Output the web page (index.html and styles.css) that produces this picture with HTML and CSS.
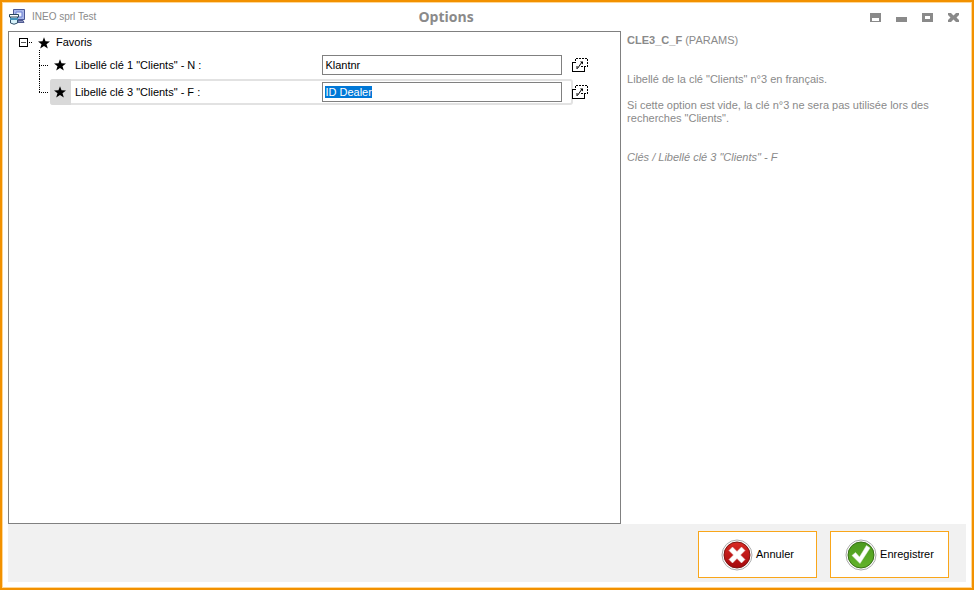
FILE: index.html
```html
<!DOCTYPE html>
<html lang="fr">
<head>
  <meta charset="UTF-8"/>
  <meta name="viewport" content="width=device-width,initial-scale=1"/>
  <title>Options</title>
  <link rel="stylesheet" href="styles.css">
</head>
<body>
  <svg class="defs" aria-hidden="true">
    <symbol id="star" viewBox="0 0 12 12">
      <path d="M6 .2 7.5 4.2 12 4.4 8.5 7.2 9.8 11.6 6 9.1 2.2 11.6 3.5 7.2 0 4.4 4.5 4.2z"/>
    </symbol>
    <symbol id="link" viewBox="0 0 16 15">
      <g fill="none" stroke="#000" shape-rendering="crispEdges">
        <path d="M3.500 .5H16M15.500 1V9M9 8.500H16M3.500 1V5" stroke-dasharray="2 1"/>
        <path d="M4 4.500H.5V13.500H12.500V9"/>
      </g>
      <path d="M5.500 10.500 10 4M5 8v3" fill="none" stroke="#000"/>
      <path d="M8 3.500h3v3z"/>
    </symbol>
  </svg>
  <header class="titlebar">
    <div class="app">
      <svg class="app-icon" width="16" height="16" viewBox="0 0 16 16">
        <path d="M4.500.5h11v10h-11z" fill="#aab8ea" stroke="#4a5796"/>
        <path d="M7 3h6v5H7z" fill="#edf3ff" stroke="#6b7fd2"/>
        <path d="M9 11.500h5l1 2H9z" fill="#8993bd" stroke="#515c91"/>
        <path d="M1.500 7.500v6.500q3.500 2.500 7 0V7.500z" fill="#d7f2fa" stroke="#33526b"/>
        <path d="M1 9h8v2H1z" fill="#4495bd"/>
        <path d="M.5 5.500h9v2.500h-9z" fill="#fff" stroke="#29465d"/>
      </svg>
      <span>INEO sprl Test</span>
    </div>
    <h1>Options</h1>
    <div class="window-buttons">
      <button type="button" aria-label="Enrouler"><svg width="12" height="10"><path d="M1 1h11v9H1zM3 6v3h7V6z" fill-rule="evenodd"/></svg></button>
      <button type="button" aria-label="Réduire"><svg width="12" height="10"><path d="M1 5h11v5H1z"/></svg></button>
      <button type="button" aria-label="Agrandir"><svg width="12" height="10"><path d="M1 1h11v9H1zM4 4v3h5V4z" fill-rule="evenodd"/></svg></button>
      <button type="button" aria-label="Fermer"><svg width="12" height="10"><path d="M1 1h3l2.500 2.500L9 1h3v2L9.500 5.500 12 8v2H9L6.500 7.500 4 10H1V8l2.500-2.500L1 3z"/></svg></button>
    </div>
  </header>
  <main>
    <section class="tree">
      <div class="group">
        <svg class="expander" width="14" height="10" shape-rendering="crispEdges">
          <path d="M.5 .5h8v8h-8z" fill="none" stroke="#000"/>
          <path d="M2 4.500h5" stroke="#555"/>
          <path d="M10 4.500h4" stroke="#000" stroke-dasharray="1 1"/>
        </svg>
        <svg class="star" width="12" height="12"><use href="#star"/></svg>
        <span>Favoris</span>
      </div>
      <ul>
        <li>
          <svg class="branch" width="41" height="27"><path d="M30.500-2V27M30 13.500H40"/></svg>
          <div class="row">
            <span class="mark"><svg class="star" width="12" height="12"><use href="#star"/></svg></span>
            <label for="cle1">Libellé clé 1 "Clients" - N :</label>
            <input id="cle1" type="text" value="Klantnr">
          </div>
          <button class="link" type="button" aria-label="Ouvrir clé 1"><svg width="16" height="15"><use href="#link"/></svg></button>
        </li>
        <li>
          <svg class="branch" width="41" height="27"><path d="M30.500 0V14M30 13.500H40"/></svg>
          <div class="row active">
            <span class="mark"><svg class="star" width="12" height="12"><use href="#star"/></svg></span>
            <label for="cle3">Libellé clé 3 "Clients" - F :</label>
            <input id="cle3" type="text" value="ID Dealer" autofocus>
          </div>
          <button class="link" type="button" aria-label="Ouvrir clé 3"><svg width="16" height="15"><use href="#link"/></svg></button>
        </li>
      </ul>
    </section>
    <aside class="info">
      <h2><b>CLE3_C_F</b> (PARAMS)</h2>
      <p>Libellé de la clé "Clients" n°3 en français.</p>
      <p>Si cette option est vide, la clé n°3 ne sera pas utilisée lors des recherches "Clients".</p>
      <p class="path">Clés / Libellé clé 3 "Clients" - F</p>
    </aside>
  </main>
  <footer>
    <button class="action" type="button">
      <svg width="32" height="32" viewBox="0 0 32 32">
        <defs><linearGradient id="red" x2="0" y2="1"><stop stop-color="#d92a24"/><stop offset="1" stop-color="#a5080c"/></linearGradient></defs>
        <circle cx="16" cy="16" r="15" fill="#fff" stroke="#aaa"/>
        <circle cx="16" cy="16" r="13" fill="url(#red)" stroke="#7c1512"/>
        <path d="M11.500 8 16 12.500 20.500 8 24 11.500 19.500 16 24 20.500 20.500 24 16 19.500 11.500 24 8 20.500 12.500 16 8 11.500z" fill="#fff" stroke="#eadcdc" stroke-width=".5"/>
      </svg>
      Annuler
    </button>
    <button class="action" type="button">
      <svg width="32" height="32" viewBox="0 0 32 32">
        <defs><linearGradient id="green" x2="0" y2="1"><stop stop-color="#4b9a1e"/><stop offset="1" stop-color="#63b32a"/></linearGradient></defs>
        <circle cx="16" cy="16" r="15" fill="#fff" stroke="#aaa"/>
        <circle cx="16" cy="16" r="13" fill="url(#green)" stroke="#386f16"/>
        <path d="M7 16.500 10.500 13.500 14.500 18 21.500 6.500 25 9 15 24.500z" fill="#fff" stroke="#e3eddc" stroke-width=".5"/>
      </svg>
      Enregistrer
    </button>
  </footer>
  <script>
    document.getElementById('cle3').select();
  </script>
</body>
</html>
```
FILE: styles.css
```css
:root {
  --orange: #f29100;
  --grey: #8a8a8a;
  --line: #808080;
}
* { box-sizing: border-box; }
body {
  margin: 0; min-height: 100vh; padding: 0 6px 6px;
  display: flex; flex-direction: column;
  border: 2px solid var(--orange); box-shadow: inset 0 0 0 1px #ffd797;
  background: #fff; color: #000;
  font: 11px/13px "Liberation Sans", Arial, sans-serif;
}
button, input { font: inherit; color: inherit; }
button { padding: 0; border: 0; background: none; cursor: pointer; }
svg { flex: none; display: block; }
.defs { position: absolute; width: 0; height: 0; }

.titlebar {
  height: 29px; display: grid; grid-template-columns: 1fr auto 1fr;
  align-items: center; color: var(--grey);
}
.app { display: flex; align-items: center; gap: 7px; padding-left: 1px; font-size: 10px; }
h1 { margin: 0 82px 0 0; font: bold 14px/16px "Open Sans", sans-serif; }
.window-buttons { display: flex; justify-content: flex-end; gap: 14px; padding-right: 7px; }
.window-buttons svg { fill: var(--grey); }

main { flex: 1; display: flex; }
.tree { flex: 0 0 64%; border: 1px solid var(--line); }
.group { height: 20px; display: flex; align-items: center; padding: 1px 0 0 10px; }
.group .star { margin: 0 6px 0 5px; }
ul { list-style: none; margin: 0; padding: 0 32px 0 0; }
li { display: flex; height: 27px; }
.branch { overflow: visible; shape-rendering: crispEdges; }
.branch path { fill: none; stroke: #000; stroke-dasharray: 1 1; }
.row {
  flex: 1; height: 26px; display: flex; align-items: center;
  border: 2px solid transparent; border-left: 0; border-radius: 3px;
}
.row.active { border-color: #e2e2e2; }
.mark {
  width: 21px; align-self: stretch; margin: -2px 4px -2px 0;
  display: flex; align-items: center; padding-left: 4px;
  border-radius: 3px 0 0 3px;
}
.active .mark { background: #d9d9d9; }
.row label { flex: 1; padding-top: 1px; }
.row input {
  flex: 0 0 46%; height: 20px; margin-right: 9px; padding: 0 2px;
  border: 1px solid var(--line); border-radius: 0; outline: 0; background: #fff;
}
.row input::selection { background: #0078d7; color: #fff; }
.link { align-self: flex-start; margin: 6px 0 0 -1px; }

.info { flex: 1; padding: 3px 20px 0 6px; color: var(--grey); }
.info h2 { margin: 0 0 26px; font: inherit; }
.info p { margin: 0 0 13px; }
.info .path { margin-top: 26px; font-style: italic; }

footer {
  display: flex; justify-content: flex-end; gap: 13px;
  padding: 7px 17px 4px; background: #f1f1f1;
}
.action {
  width: 119px; height: 47px; display: flex; align-items: center; justify-content: center;
  gap: 3px; border: 1px solid #f9a61a; background: #fff;
}
```
